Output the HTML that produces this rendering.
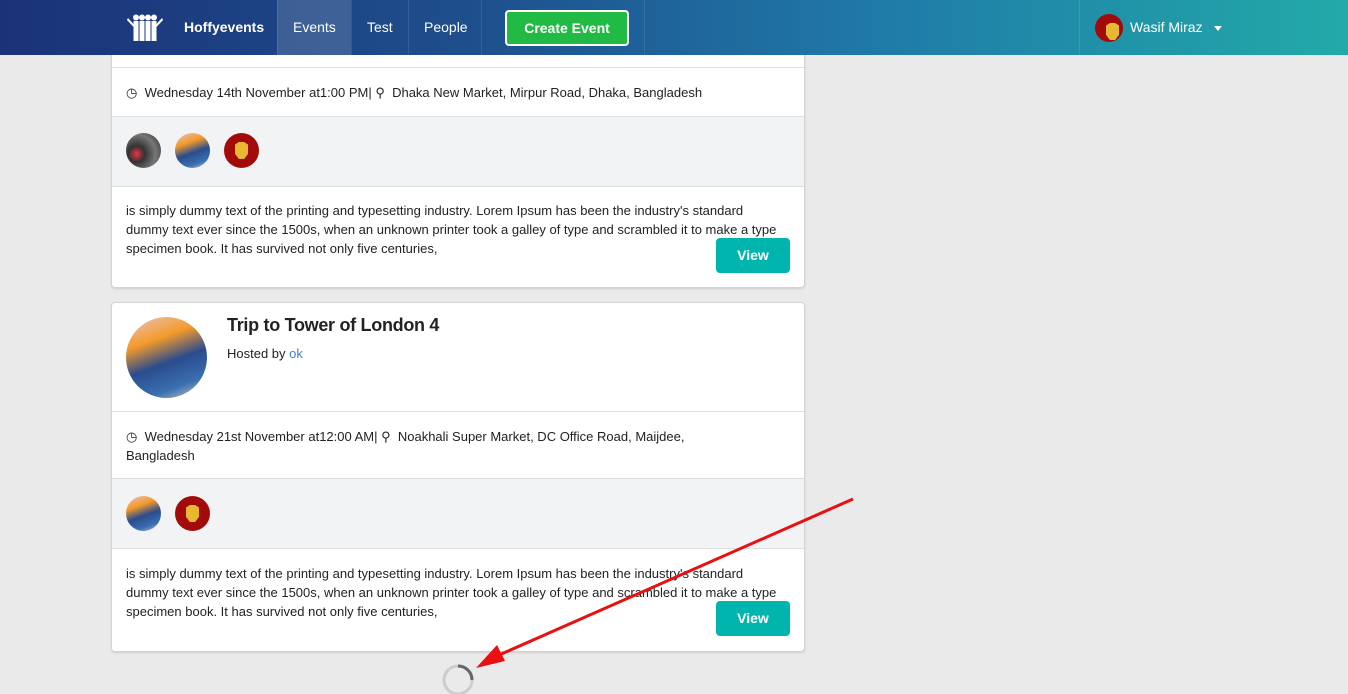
<!DOCTYPE html>
<html><head><meta charset="utf-8"><style>
*{box-sizing:border-box;margin:0;padding:0}
body{width:1348px;height:694px;overflow:hidden;background:#eaeaea;font-family:"Liberation Sans",sans-serif;color:#222;font-size:13px;position:relative}
.nav{position:absolute;left:0;top:0;width:1348px;height:55px;z-index:5;background:linear-gradient(90deg,#1b3278 0%,#1e4f8c 35%,#1f7aa8 65%,#22aaa8 100%)}
.nav a{position:absolute;top:0;height:55px;line-height:55px;color:#fff;font-size:14px;text-decoration:none}
.sep{position:absolute;top:0;width:1px;height:55px;background:rgba(255,255,255,.1)}
.card{position:absolute;left:111px;width:694px;background:#fff;border:1px solid #d4d4d5;border-radius:4px;box-shadow:0 1px 2px rgba(0,0,0,.12)}
.sec{position:absolute;left:0;width:692px;border-top:1px solid #dedede}
.grey{background:#f2f3f5}
.txt{position:absolute;left:14px;font-size:13px;line-height:19px;color:#222}
.av{position:absolute;width:35px;height:35px;border-radius:50%}
.iron{background:#a30a0a}
.iron:after{content:"";position:absolute;left:11px;top:9px;width:13px;height:17px;background:#e8b832;clip-path:polygon(0 15%,30% 0,70% 0,100% 15%,100% 70%,70% 100%,30% 100%,0 70%)}
.cat{background:radial-gradient(circle at 30% 60%,#e34 0,#333 25%,#777 60%,#222 100%)}
.art{background:linear-gradient(160deg,#e8c5c5 0%,#f39a2a 30%,#2a4c8e 55%,#3a6fb0 80%,#ccc 100%)}
.view{position:absolute;right:14px;width:74px;height:35px;background:#00b5ad;color:#fff;font-weight:bold;font-size:14px;line-height:35px;text-align:center;border-radius:4px}
</style></head><body>
<div class="nav">
<svg style="position:absolute;left:127px;top:14px" width="36" height="28" viewBox="0 0 36 28" fill="#fff"><circle cx="9" cy="3.5" r="3"/><circle cx="15" cy="3.5" r="3"/><circle cx="21" cy="3.5" r="3"/><circle cx="27" cy="3.5" r="3"/><rect x="6.5" y="7" width="5" height="20"/><rect x="12.5" y="7" width="5" height="20"/><rect x="18.5" y="7" width="5" height="20"/><rect x="24.5" y="7" width="5" height="20"/><path d="M1 4 L6.5 10 L6.5 13 L0 6Z M35 4 L29.5 10 L29.5 13 L36 6Z"/></svg>
<a style="left:184px;font-weight:bold">Hoffyevents</a>
<div class="sep" style="left:277px"></div>
<div style="position:absolute;left:277px;top:0;width:74px;height:55px;background:rgba(255,255,255,.15)"></div>
<a style="left:293px">Events</a>
<div class="sep" style="left:351px"></div>
<a style="left:367px">Test</a>
<div class="sep" style="left:408px"></div>
<a style="left:424px">People</a>
<div class="sep" style="left:481px"></div>
<div style="position:absolute;left:505px;top:10px;width:124px;height:36px;background:#21ba45;border:2px solid #fff;border-radius:4px;color:#fff;font-weight:bold;font-size:14px;text-align:center;line-height:32px">Create Event</div>
<div class="sep" style="left:644px"></div>
<div class="sep" style="left:1079px"></div>
<div class="av iron" style="left:1095px;top:14px;width:28px;height:28px"></div>
<a style="left:1130px">Wasif Miraz</a>
<div style="position:absolute;left:1214px;top:26px;border-left:4px solid transparent;border-right:4px solid transparent;border-top:5px solid #fff"></div>
</div>

<div class="card" style="top:-20px;height:308px">
<div class="sec" style="top:86px;height:49px"><div class="txt" style="top:15px">&#9719;&nbsp; Wednesday 14th November at1:00 PM| &#9906;&nbsp; Dhaka New Market, Mirpur Road, Dhaka, Bangladesh</div></div>
<div class="sec grey" style="top:135px;height:70px">
<div class="av cat" style="left:14px;top:16px"></div><div class="av art" style="left:63px;top:16px"></div><div class="av iron" style="left:112px;top:16px"></div></div>
<div class="sec" style="top:205px;height:101px"><div class="txt" style="top:14px;width:655px">is simply dummy text of the printing and typesetting industry. Lorem Ipsum has been the industry's standard dummy text ever since the 1500s, when an unknown printer took a galley of type and scrambled it to make a type specimen book. It has survived not only five centuries,</div><div class="view" style="top:51px">View</div></div>
</div>

<div class="card" style="top:302px;height:350px">
<div class="av art" style="left:14px;top:14px;width:81px;height:81px"></div>
<div style="position:absolute;left:115px;top:12px;font-size:18px;color:#222;font-weight:bold;letter-spacing:-0.3px">Trip to Tower of London 4</div>
<div style="position:absolute;left:115px;top:43px;font-size:13px">Hosted by <span style="color:#4183c4">ok</span></div>
<div class="sec" style="top:108px;height:67px"><div class="txt" style="top:15px;width:610px">&#9719;&nbsp; Wednesday 21st November at12:00 AM| &#9906;&nbsp; Noakhali Super Market, DC Office Road, Maijdee, Bangladesh</div></div>
<div class="sec grey" style="top:175px;height:70px"><div class="av art" style="left:14px;top:17px"></div><div class="av iron" style="left:63px;top:17px"></div></div>
<div class="sec" style="top:245px;height:103px"><div class="txt" style="top:15px;width:655px">is simply dummy text of the printing and typesetting industry. Lorem Ipsum has been the industry's standard dummy text ever since the 1500s, when an unknown printer took a galley of type and scrambled it to make a type specimen book. It has survived not only five centuries,</div><div class="view" style="top:52px">View</div></div>
</div>

<svg style="position:absolute;left:0;top:0;z-index:6" width="1348" height="694">
<circle cx="458" cy="680" r="14" fill="none" stroke="#ccc" stroke-width="3"/>
<path d="M458 666 A14 14 0 0 1 472 680" fill="none" stroke="#666" stroke-width="3"/>
<line x1="853" y1="499" x2="490" y2="659" stroke="#e81010" stroke-width="3"/>
<polygon points="476,668 497,645 505,661" fill="#e81010"/>
</svg>
</body></html>
